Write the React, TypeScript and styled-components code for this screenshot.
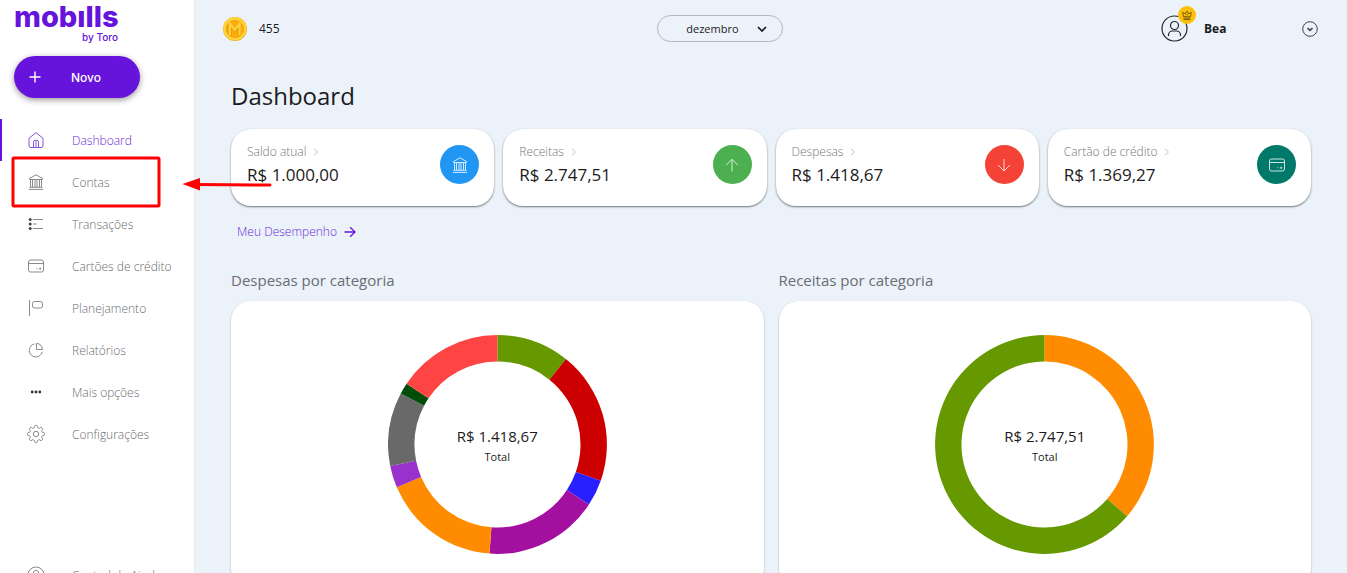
import React from "react";
import styled, { createGlobalStyle } from "styled-components";

const GlobalStyle = createGlobalStyle`
  *, *::before, *::after { box-sizing: border-box; }
  body {
    margin: 0;
    background: #ebf2fa;
    color: #1c1b20;
    font-family: "Open Sans", "Noto Sans", sans-serif;
    font-size: 12px;
  }
  button, select { font-family: inherit; }
  a { color: inherit; text-decoration: none; }
  h1, h2, p, ul { margin: 0; padding: 0; }
`;

const Shell = styled.div`
  position: relative;
  display: flex;
  height: 100vh;
  overflow: hidden;
`;

const Sidebar = styled.aside`
  flex: 0 0 195px;
  height: 100%;
  overflow: hidden;
  background: #fff;
  border-right: 1px solid #e9ebee;
`;

const Brand = styled.a`
  display: flex;
  flex-direction: column;
  width: 104px;
  margin-left: 14px;
  padding-top: 2px;
  color: #6614dc;
  font-family: Inter, sans-serif;
`;

const BrandName = styled.span`
  font-size: 29px;
  font-weight: 800;
  line-height: 29px;
`;

const BrandBy = styled.span`
  align-self: flex-end;
  font-size: 10px;
  font-weight: 500;
  line-height: 12px;
`;

const NewButton = styled.button`
  display: flex;
  align-items: center;
  gap: 29px;
  width: 126px;
  height: 42px;
  margin: 13px 0 21px 14px;
  padding: 0 14px;
  border: 0;
  border-radius: 21px;
  background: #6614dc;
  color: #fff;
  font-family: Inter, sans-serif;
  font-size: 12px;
  font-weight: 500;
  box-shadow: 0 2px 6px rgba(0, 0, 0, 0.4);
  cursor: pointer;
`;

const NavList = styled.ul`
  list-style: none;
`;

const NavLink = styled.a<{ $active?: boolean }>`
  display: flex;
  align-items: center;
  gap: 26px;
  height: 42px;
  padding-left: 24px;
  border-left: 2px solid ${(p) => (p.$active ? "#6614dc" : "transparent")};
  color: ${(p) => (p.$active ? "#6a28da" : "#6c6c71")};
  font-weight: 300;
  white-space: nowrap;
`;

const HelpList = styled(NavList)`
  margin-top: 99px;
`;

const Main = styled.main`
  flex: 1;
  min-width: 0;
  overflow-y: auto;
  scrollbar-width: none;
`;

const TopBar = styled.header`
  display: flex;
  align-items: center;
  justify-content: space-between;
  height: 57px;
  padding: 0 29px 0 28px;
`;

const Points = styled.div`
  display: flex;
  align-items: center;
  gap: 12px;
`;

const MonthPicker = styled.div`
  position: relative;
`;

const MonthSelect = styled.select`
  width: 126px;
  height: 27px;
  padding: 0 36px 0 28px;
  border: 1px solid #b2b6c1;
  border-radius: 14px;
  appearance: none;
  background: transparent;
  color: #1c1b20;
  font-size: 11px;
`;

const PickerArrow = styled.svg`
  position: absolute;
  top: 8px;
  right: 15px;
  pointer-events: none;
`;

const User = styled.div`
  display: flex;
  align-items: center;
  width: 157px;
  font-weight: 700;
`;

const Avatar = styled.span`
  position: relative;
  display: flex;
  margin-right: 16px;
`;

const Crown = styled.svg`
  position: absolute;
  top: -9px;
  left: 17px;
`;

const MenuButton = styled.button`
  display: flex;
  margin-left: auto;
  padding: 0;
  border: 0;
  background: none;
  cursor: pointer;
`;

const Content = styled.div`
  padding: 23px 36px 40px;
`;

const PageTitle = styled.h1`
  font-size: 24px;
  font-weight: 400;
  line-height: 32px;
`;

const CardRow = styled.section`
  display: grid;
  grid-template-columns: repeat(4, 1fr);
  gap: 9px;
  margin: 17px 0 16px;
`;

const SummaryCard = styled.a`
  display: flex;
  justify-content: space-between;
  padding: 13px 15px 18px 16px;
  border-radius: 20px;
  background: #fff;
  box-shadow: 0 1px 2px rgba(30, 34, 40, 0.6);
`;

const CardLabel = styled.p`
  display: flex;
  align-items: center;
  gap: 7px;
  color: #77777c;
  font-weight: 300;
  line-height: 20px;
`;

const CardValue = styled.p`
  font-size: 17px;
  font-weight: 500;
  line-height: 26px;
`;

const CardBadge = styled.span<{ $color: string }>`
  display: grid;
  place-items: center;
  width: 39px;
  height: 39px;
  margin-top: 3px;
  border-radius: 50%;
  background: ${(p) => p.$color};
  color: #fff;
`;

const MoreLink = styled.a`
  display: inline-flex;
  align-items: center;
  gap: 7px;
  margin-left: 6px;
  color: #6a28da;
  font-weight: 300;
  line-height: 20px;
`;

const ChartRow = styled.div`
  display: grid;
  grid-template-columns: 1fr 1fr;
  gap: 15px;
  margin-top: 26px;
`;

const ChartTitle = styled.h2`
  margin-bottom: 9px;
  color: #6b6d73;
  font-size: 15px;
  font-weight: 400;
  line-height: 24px;
`;

const ChartCard = styled.div`
  display: grid;
  justify-items: center;
  padding: 34px 20px;
  border-radius: 20px;
  background: #fff;
  box-shadow: 0 1px 2px rgba(30, 34, 40, 0.35);
`;

const ChartArea = styled.div`
  display: grid;
  place-items: center;

  > * { grid-area: 1 / 1; }
`;

const ChartTotal = styled.div`
  padding-top: 2px;
  text-align: center;
`;

const TotalValue = styled.p`
  font-size: 15px;
  line-height: 22px;
`;

const TotalLabel = styled.p`
  font-size: 11px;
  line-height: 20px;
`;

const Callout = styled.svg`
  position: absolute;
  top: 150px;
  left: 0;
  pointer-events: none;
`;

type IconName = "home" | "bank" | "list" | "card" | "flag" | "pie" | "dots" | "gear" | "help" | "up" | "down";

const gearPath = (() => {
  const points: string[] = [];
  for (let i = 0; i <= 96; i++) {
    const a = (i / 96) * Math.PI * 2;
    const r = 7.5 + 1.1 * Math.tanh(2.4 * Math.cos(a * 8));
    points.push(`${(10 + r * Math.sin(a)).toFixed(2)} ${(10 - r * Math.cos(a)).toFixed(2)}`);
  }
  return `M${points.join("L")}Z`;
})();

const drawings: Record<IconName, React.ReactNode> = {
  home: (
    <>
      <path d="M3 8.3 10 2.6l7 5.7v7.2a2 2 0 0 1-2 2H5a2 2 0 0 1-2-2z" />
      <path d="M7.5 17.3v-5.5a1.5 1.5 0 0 1 1.5-1.5h2a1.5 1.5 0 0 1 1.5 1.5v5.5M10 11v6" />
    </>
  ),
  bank: (
    <>
      <path d="M3.5 6.5 10 2.8l6.5 3.7v1h-13z" />
      <path d="M4.5 8v7M6.5 8v7M9 8v7M11 8v7M13.5 8v7M15.5 8v7M3.5 15.3h13M2.8 17.4h14.4" />
    </>
  ),
  list: (
    <>
      <path d="M7 5.5h10M7 10h3.5M7 14.5h10" />
      <g fill="#44444a" stroke="none">
        <circle cx="4.2" cy="5.6" r="1.5" />
        <circle cx="4.2" cy="10" r="1.5" />
        <circle cx="4.2" cy="14.4" r="1.5" />
      </g>
    </>
  ),
  card: (
    <>
      <rect x="2.5" y="4" width="15" height="12" rx="2" />
      <path d="M2.5 7.5h15M10.5 12.8h1" />
      <circle cx="14.2" cy="12.8" r="0.7" />
    </>
  ),
  flag: (
    <>
      <path d="M3.5 2v16" />
      <rect x="6.5" y="3.5" width="10" height="6.5" rx="2" />
    </>
  ),
  pie: (
    <>
      <path d="M8.5 3.9a6.600 6.600 0 1 0 7.800 7.800" />
      <path d="M10.5 3.4v6.1h6a6 6 0 0 0-6-6.1z" />
    </>
  ),
  dots: (
    <g fill="#33333a" stroke="none">
      <circle cx="6.200" cy="10" r="1.400" />
      <circle cx="10" cy="10" r="1.400" />
      <circle cx="13.800" cy="10" r="1.400" />
    </g>
  ),
  gear: (
    <>
      <path d={gearPath} />
      <circle cx="10" cy="10" r="2.7" />
    </>
  ),
  help: (
    <>
      <circle cx="10" cy="10" r="8" />
      <path d="M7.4 8a2.6 2.6 0 1 1 3.8 2.2c-.8.5-1.200.9-1.200 2M10 14v.8" />
    </>
  ),
  up: <path d="M10 16.500v-12M4 10.300l6-6 6 6" />,
  down: <path d="M10 4v12M4 10l6 6 6-6" />,
};

function Icon({ name }: { name: IconName }) {
  return (
    <svg width="20" height="20" viewBox="0 0 20 20" fill="none" stroke="currentColor" strokeWidth="0.8" strokeLinejoin="round" aria-hidden="true">
      {drawings[name]}
    </svg>
  );
}

interface Slice {
  color: string;
  end: number;
}

function Donut({ slices, label }: { slices: Slice[]; label: string }) {
  const at = (deg: number, r: number) => {
    const a = (deg * Math.PI) / 180;
    return `${(109.5 + r * Math.sin(a)).toFixed(2)} ${(109.5 - r * Math.cos(a)).toFixed(2)}`;
  };
  return (
    <svg width="219" height="219" viewBox="0 0 219 219" role="img" aria-label={label}>
      {slices.map((slice, i) => {
        const start = i ? slices[i - 1].end : 0;
        const large = slice.end - start > 180 ? 1 : 0;
        return (
          <path
            key={slice.color}
            fill={slice.color}
            d={`M${at(start, 109.4)}A109.4 109.4 0 ${large} 1 ${at(slice.end, 109.4)}L${at(slice.end, 83)}A83 83 0 ${large} 0 ${at(start, 83)}Z`}
          />
        );
      })}
    </svg>
  );
}

const navItems: { icon: IconName; label: string }[] = [
  { icon: "home", label: "Dashboard" },
  { icon: "bank", label: "Contas" },
  { icon: "list", label: "Transações" },
  { icon: "card", label: "Cartões de crédito" },
  { icon: "flag", label: "Planejamento" },
  { icon: "pie", label: "Relatórios" },
  { icon: "dots", label: "Mais opções" },
  { icon: "gear", label: "Configurações" },
];

const summaries: { label: string; value: string; color: string; icon: IconName }[] = [
  { label: "Saldo atual", value: "R$ 1.000,00", color: "#2196f3", icon: "bank" },
  { label: "Receitas", value: "R$ 2.747,51", color: "#4caf50", icon: "up" },
  { label: "Despesas", value: "R$ 1.418,67", color: "#f44336", icon: "down" },
  { label: "Cartão de crédito", value: "R$ 1.369,27", color: "#00796b", icon: "card" },
];

const charts: { title: string; total: string; slices: Slice[] }[] = [
  {
    title: "Despesas por categoria",
    total: "R$ 1.418,67",
    slices: [
      { color: "#669900", end: 38.7 },
      { color: "#cc0000", end: 109.3 },
      { color: "#2920ff", end: 123.3 },
      { color: "#a30f9f", end: 184.2 },
      { color: "#ff8c00", end: 247 },
      { color: "#9932cc", end: 258.7 },
      { color: "#696969", end: 297.8 },
      { color: "#004d0a", end: 303.8 },
      { color: "#ff4444", end: 360 },
    ],
  },
  {
    title: "Receitas por categoria",
    total: "R$ 2.747,51",
    slices: [
      { color: "#ff8c00", end: 131 },
      { color: "#669900", end: 360 },
    ],
  },
];

export default function App() {
  return (
    <>
      <GlobalStyle />
      <Shell>
        <Sidebar>
          <Brand href="#">
            <BrandName>mobılls</BrandName>
            <BrandBy>by Toro</BrandBy>
          </Brand>
          <NewButton type="button">
            <svg width="14" height="14" viewBox="0 0 14 14" stroke="#fff" strokeWidth="1.4" aria-hidden="true">
              <path d="M7 1.5v11M1.5 7h11" />
            </svg>
            Novo
          </NewButton>
          <nav>
            <NavList>
              {navItems.map((item, i) => (
                <li key={item.label}>
                  <NavLink href="#" $active={i === 0}>
                    <Icon name={item.icon} />
                    {item.label}
                  </NavLink>
                </li>
              ))}
            </NavList>
            <HelpList>
              <li>
                <NavLink href="#">
                  <Icon name="help" />
                  Central de Ajuda
                </NavLink>
              </li>
            </HelpList>
          </nav>
        </Sidebar>

        <Main>
          <TopBar>
            <Points>
              <svg width="24" height="24" viewBox="0 0 24 24" aria-hidden="true">
                <circle cx="12" cy="12" r="12" fill="#e5ad25" />
                <circle cx="11.8" cy="11.7" r="11.6" fill="#ffd43b" />
                <circle cx="12" cy="12" r="9" fill="#d99a1c" />
                <circle cx="12.4" cy="12.3" r="8.5" fill="#ffa90a" />
                <path d="M7.5 19V7.800l4.500 5.800 4.500-5.800V19" fill="none" stroke="#e0950c" strokeWidth="3" />
                <path d="M7 18.500V6.500l4.800 6.500 4.800-6.500v12" fill="none" stroke="#ffd43b" strokeWidth="2.200" />
              </svg>
              455
            </Points>
            <MonthPicker>
              <MonthSelect aria-label="Mês" defaultValue="dezembro">
                <option>dezembro</option>
              </MonthSelect>
              <PickerArrow width="12" height="12" viewBox="0 0 12 12" fill="none" stroke="#1c1b20" strokeWidth="1.7" aria-hidden="true">
                <path d="m2 4 4 4 4-4" />
              </PickerArrow>
            </MonthPicker>
            <User>
              <Avatar>
                <svg width="27" height="27" viewBox="0 0 27 27" fill="none" stroke="#25242b" strokeWidth="1.2" aria-hidden="true">
                  <circle cx="13.5" cy="13.5" r="12.5" />
                  <circle cx="13.5" cy="10.5" r="4" />
                  <path d="M7.5 21v-1a4 4 0 0 1 4-4h4a4 4 0 0 1 4 4v1" />
                </svg>
                <Crown width="18" height="18" viewBox="0 0 18 18" aria-hidden="true">
                  <circle cx="9" cy="9" r="9" fill="#ffc107" />
                  <path
                    d="M5.5 10.7 4.7 6.2l2.5 1.8L9 5l1.8 3 2.5-1.8-.8 4.5zM5.5 12.2h7M5.5 13.6h7M9 8v1.5"
                    fill="none"
                    stroke="#6b5210"
                    strokeWidth="0.9"
                  />
                </Crown>
              </Avatar>
              Bea
              <MenuButton type="button" aria-label="Abrir menu">
                <svg width="16" height="16" viewBox="0 0 16 16" fill="none" stroke="#44444b">
                  <circle cx="8" cy="8" r="7.3" />
                  <path d="m5.5 7 2.5 2.3L10.5 7" strokeWidth="1.6" />
                </svg>
              </MenuButton>
            </User>
          </TopBar>

          <Content>
            <PageTitle>Dashboard</PageTitle>
            <CardRow>
              {summaries.map((item) => (
                <SummaryCard href="#" key={item.label}>
                  <div>
                    <CardLabel>
                      {item.label}
                      <svg width="6" height="8" viewBox="0 0 6 8" fill="none" stroke="#c4c4c8" aria-hidden="true">
                        <path d="m1 .8 3.5 3.2L1 7.2" />
                      </svg>
                    </CardLabel>
                    <CardValue>{item.value}</CardValue>
                  </div>
                  <CardBadge $color={item.color}>
                    <Icon name={item.icon} />
                  </CardBadge>
                </SummaryCard>
              ))}
            </CardRow>
            <MoreLink href="#">
              Meu Desempenho
              <svg width="12" height="12" viewBox="0 0 12 12" fill="none" stroke="#6614dc" strokeWidth="1.3" aria-hidden="true">
                <path d="M.5 6H11M6.2 1.200 11 6l-4.800 4.800" />
              </svg>
            </MoreLink>
            <ChartRow>
              {charts.map((chart) => (
                <section key={chart.title}>
                  <ChartTitle>{chart.title}</ChartTitle>
                  <ChartCard>
                    <ChartArea>
                      <Donut slices={chart.slices} label={chart.title} />
                      <ChartTotal>
                        <TotalValue>{chart.total}</TotalValue>
                        <TotalLabel>Total</TotalLabel>
                      </ChartTotal>
                    </ChartArea>
                  </ChartCard>
                </section>
              ))}
            </ChartRow>
          </Content>
        </Main>

        <Callout width="280" height="64" viewBox="0 0 280 64" aria-hidden="true">
          <rect x="13" y="8" width="146" height="48" rx="1" fill="none" stroke="#ff0000" strokeWidth="3" />
          <path d="M196 34.500 270 35" stroke="#ff0000" strokeWidth="3" strokeLinecap="round" />
          <path d="M182.500 34 200 28v12.500z" fill="#ff0000" />
        </Callout>
      </Shell>
    </>
  );
}
